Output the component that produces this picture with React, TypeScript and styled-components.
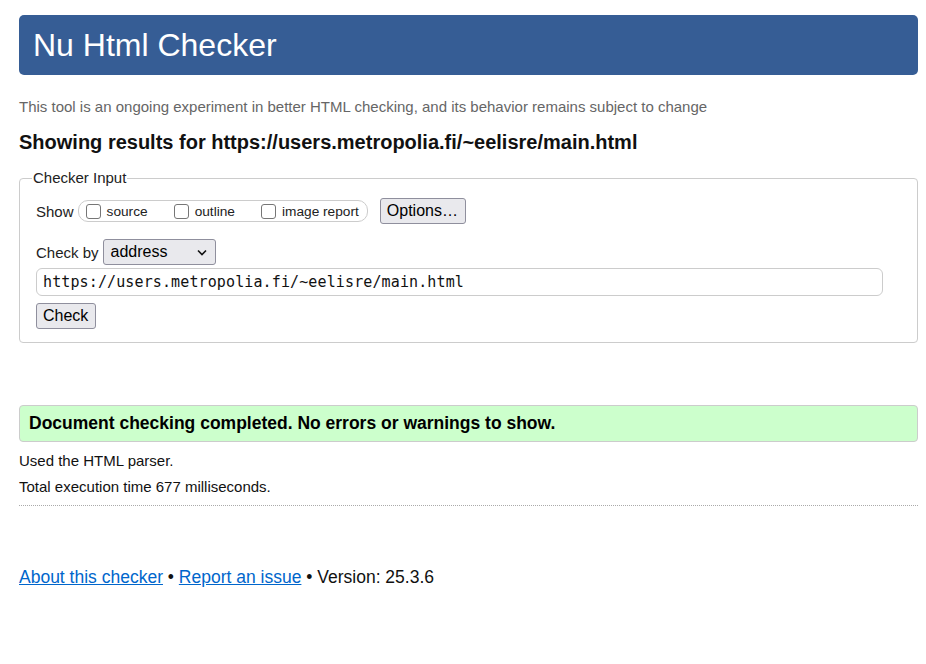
import React from 'react'
import styled, { createGlobalStyle } from 'styled-components'

const GlobalStyle = createGlobalStyle`
  html, body {
    margin: 0;
    padding: 0;
    background: #fff;
  }
  body {
    font-family: "Liberation Sans", Arial, sans-serif;
    color: #111;
  }
`

const Page = styled.div`
  padding: 15px 8px 0 19px;
  width: 899px;
`

const Header = styled.h1`
  margin: 0;
  height: 60px;
  display: flex;
  align-items: center;
  padding: 0 14px;
  background: #365d95;
  border-radius: 5px;
  color: #fff;
  font-weight: normal;
  font-size: 32px;
`

const Tagline = styled.p`
  margin: 23px 0 0;
  font-size: 15px;
  line-height: 18px;
  color: #666;
`

const Results = styled.h2`
  margin: 14px 0 0;
  font-size: 20px;
  line-height: 24px;
  font-weight: bold;
  color: #111;
`

const Fieldset = styled.fieldset`
  margin: 16px 0 0;
  padding: 12px 16px 13px;
  border: 1px solid #ccc;
  border-radius: 4px;
`

const Legend = styled.legend`
  font-size: 15px;
  line-height: 16px;
  padding: 0 1px;
  margin-left: -4px;
  color: #222;
`

const Row = styled.div<{ gap?: number; top?: number }>`
  display: flex;
  align-items: center;
  gap: ${(p) => p.gap ?? 0}px;
  margin-top: ${(p) => p.top ?? 0}px;
`

const Label = styled.span`
  font-size: 15px;
  color: #222;
`

const Pill = styled.div`
  display: flex;
  align-items: center;
  height: 22px;
  margin-left: 4px;
  padding: 0 8px 0 7px;
  border: 1px solid #ccc;
  border-radius: 10px;
  box-sizing: border-box;
  gap: 26px;
`

const CheckItem = styled.label`
  display: flex;
  align-items: center;
  font-size: 13.7px;
  color: #222;
`

const Box = styled.span`
  width: 15px;
  height: 15px;
  border: 1.5px solid #767676;
  border-radius: 3px;
  box-sizing: border-box;
  margin-right: 6px;
`

const Button = styled.button`
  font-family: "Liberation Sans", Arial, sans-serif;
  font-size: 16px;
  color: #000;
  background: #e9e9ed;
  border: 1px solid #8f8f9d;
  border-radius: 3px;
  height: 26px;
  padding: 0 7px 0 6px;
  box-sizing: border-box;
`

const Select = styled.div`
  display: flex;
  align-items: center;
  justify-content: space-between;
  width: 113px;
  height: 26px;
  margin-left: 4px;
  padding: 0 8px 0 7px;
  box-sizing: border-box;
  font-size: 16px;
  color: #000;
  background: #e9e9ed;
  border: 1px solid #8f8f9d;
  border-radius: 3px;
`

const UrlInput = styled.div`
  margin-top: 3px;
  width: 847px;
  height: 28px;
  box-sizing: border-box;
  display: flex;
  align-items: center;
  padding: 0 6px;
  border: 1px solid #ccc;
  border-radius: 6px;
  font-family: "DejaVu Sans Mono", "Liberation Mono", monospace;
  font-size: 15px;
  letter-spacing: 0.12px;
  color: #111;
`

const Success = styled.div`
  margin-top: 62px;
  height: 37px;
  display: flex;
  align-items: center;
  padding: 0 9px;
  box-sizing: border-box;
  background: #ccffcc;
  border: 1px solid #ccc;
  border-radius: 4px;
  font-size: 17.5px;
  font-weight: bold;
  color: #000;
`

const Detail = styled.p<{ top: number }>`
  margin: ${(p) => p.top}px 0 0;
  font-size: 15px;
  line-height: 18px;
  color: #111;
`

const Rule = styled.hr`
  margin: 9px 0 0;
  border: none;
  border-top: 1px dotted #aaa;
`

const Footer = styled.p`
  margin: 61px 0 0;
  font-size: 17.5px;
  line-height: 20px;
  color: #111;
`

const Link = styled.a`
  color: #0066cc;
  text-decoration: underline;
`

export default function App() {
  return (
    <>
      <GlobalStyle />
      <Page>
        <Header>Nu Html Checker</Header>
        <Tagline>
          This tool is an ongoing experiment in better HTML checking, and its behavior remains subject to change
        </Tagline>
        <Results>Showing results for https://users.metropolia.fi/~eelisre/main.html</Results>
        <Fieldset>
          <Legend>Checker Input</Legend>
          <Row gap={12}>
            <Row>
              <Label>Show</Label>
              <Pill>
                <CheckItem>
                  <Box />
                  source
                </CheckItem>
                <CheckItem>
                  <Box />
                  outline
                </CheckItem>
                <CheckItem>
                  <Box />
                  image report
                </CheckItem>
              </Pill>
            </Row>
            <Button>Options…</Button>
          </Row>
          <Row top={15}>
            <Label>Check by</Label>
            <Select>
              address
              <svg width="10" height="7" viewBox="0 0 10 7">
                <path d="M1 1.5 L5 5.5 L9 1.5" fill="none" stroke="#111" strokeWidth="1.6" />
              </svg>
            </Select>
          </Row>
          <UrlInput>https://users.metropolia.fi/~eelisre/main.html</UrlInput>
          <Row top={7}>
            <Button>Check</Button>
          </Row>
        </Fieldset>
        <Success>Document checking completed. No errors or warnings to show.</Success>
        <Detail top={10}>Used the HTML parser.</Detail>
        <Detail top={8}>Total execution time 677 milliseconds.</Detail>
        <Rule />
        <Footer>
          <Link href="#">About this checker</Link> • <Link href="#">Report an issue</Link> • Version: 25.3.6
        </Footer>
      </Page>
    </>
  )
}
